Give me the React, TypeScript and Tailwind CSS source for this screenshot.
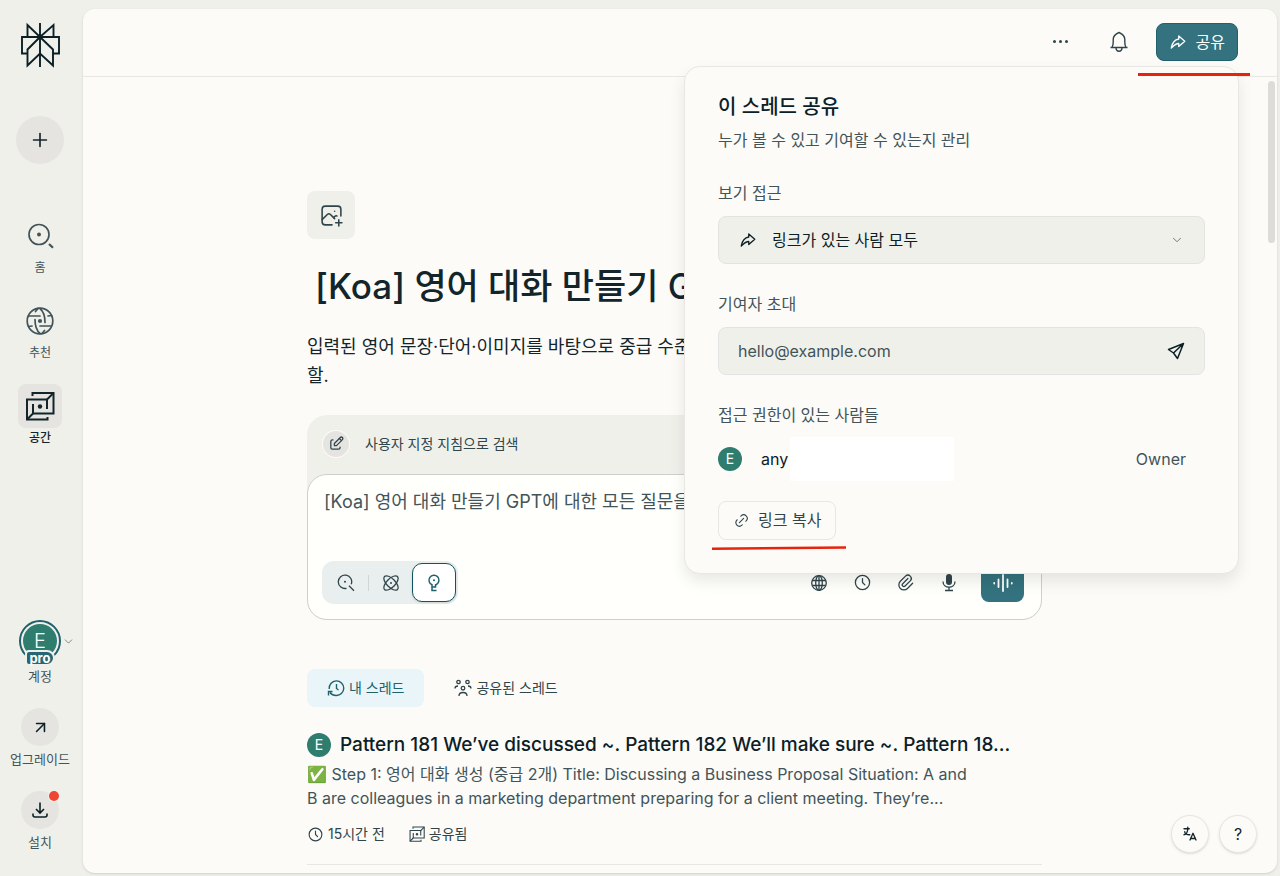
import { useState } from "react"
import type { ReactNode } from "react"
import {
  TbClock,
  TbEdit,
  TbLanguage,
  TbLink,
  TbPaperclip,
  TbPhotoPlus,
  TbShare3,
} from "react-icons/tb"
import { ArrowUpRight, ChevronDown, Plus } from "lucide-react"

type IconProps = { className?: string }

function Logo() {
  return (
    <svg viewBox="0 0 40 46" className="h-[46px] w-10" fill="none" stroke="#0b2026" strokeWidth="1.9">
      <path d="M20 1v44M2 15h37v16.500h-6M2 14v17.500h5.500" />
      <path d="M7.500 15V3L20 15 33.500 3v12M20 15 7.500 27.500V43.500L20 31.500l13 12V27.500L20 15" />
      <circle cx="20" cy="15" r="2.500" fill="#0b2026" stroke="none" />
    </svg>
  )
}

function HomeIcon({ className }: IconProps) {
  return (
    <svg viewBox="0 0 28 28" className={className} fill="none" stroke="currentColor" strokeWidth="1.7">
      <circle cx="13" cy="12.500" r="10" />
      <circle cx="13" cy="12.500" r="2" fill="currentColor" stroke="none" />
      <path d="m23 22 4 3.800" strokeWidth="2.200" />
    </svg>
  )
}

function DiscoverIcon({ className }: IconProps) {
  return (
    <svg viewBox="0 0 28 28" className={className} fill="none" stroke="currentColor" strokeWidth="1.7" strokeLinecap="round">
      <circle cx="14" cy="14" r="12.800" />
      <circle cx="14" cy="14" r="2.100" fill="currentColor" stroke="none" />
      <path d="M3 9h11M14 19h11M14 1.500c3.500 3 5 7 5 14M14 26.500c-3.500-3-5-7-5-14" />
      <path d="M12 1.500 9.500 4.500M16 26.500l2.500-3M22 9l3.500-.500M6 19l-3.500.500" />
    </svg>
  )
}

function SpacesIcon({ className }: IconProps) {
  return (
    <svg viewBox="0 0 30 30" className={className} fill="none" stroke="currentColor" strokeWidth="2">
      <path d="M7.500 5V2H28.500v20.500H8V13" />
      <path d="M22 18V8.500H2v20h20.500V26" />
      <path d="M28.500 2 22 8.500M2 28.500l6-6" />
      <circle cx="15" cy="15.500" r="2.200" fill="currentColor" stroke="none" />
    </svg>
  )
}

function BellIcon() {
  return (
    <svg viewBox="0 0 20 22" className="h-[22px] w-5" fill="none" stroke="currentColor" strokeWidth="1.4" strokeLinejoin="round">
      <path d="M1.500 16.500h17M3 16.500c.8-1.500 1.200-3 1.200-5V8.500C4.200 4.500 7.500 2.500 10 1.500c2.500 1 5.800 3 5.800 7v3c0 2 .4 3.500 1.200 5" />
      <path d="M7 16.500c0 5 6 5 6 0" />
    </svg>
  )
}

function SendIcon() {
  return (
    <svg viewBox="0 0 18 18" className="size-[18px]" fill="none" stroke="currentColor" strokeWidth="1.5" strokeLinejoin="round">
      <path d="M16.500 1.500 1.500 7.500l5 3.500 4 5.500 6-15ZM6.500 11l10-9.500" />
    </svg>
  )
}

function SearchIcon() {
  return (
    <svg viewBox="0 0 18 18" className="size-[18px]" fill="none" stroke="currentColor" strokeWidth="1.3">
      <path d="M9.500 14.300A6.700 6.700 0 1 1 14.200 10.300M12 11.800l5 5" />
      <circle cx="8" cy="7.800" r="1" fill="currentColor" stroke="none" />
    </svg>
  )
}

function ResearchIcon() {
  return (
    <svg viewBox="0 0 18 18" className="size-[18px]" fill="none" stroke="currentColor" strokeWidth="1.300">
      <ellipse cx="9" cy="9" rx="9.200" ry="4.300" transform="rotate(45 9 9)" />
      <ellipse cx="9" cy="9" rx="9.200" ry="4.300" transform="rotate(-45 9 9)" />
      <circle cx="9" cy="9" r="1" fill="currentColor" stroke="none" />
    </svg>
  )
}

function BulbIcon() {
  return (
    <svg viewBox="0 0 18 18" className="size-[18px]" fill="none" stroke="currentColor" strokeWidth="1.500">
      <path d="M7 14v-3.200a5 5 0 1 1 4.500-.300L10.500 11v2H7M7 13v3.500h4.500" />
      <circle cx="9" cy="6.200" r="1" fill="currentColor" stroke="none" />
    </svg>
  )
}

function GlobeIcon() {
  return (
    <svg viewBox="0 0 18 18" className="size-[18px]" fill="none" stroke="currentColor" strokeWidth="1.300">
      <circle cx="9" cy="9" r="7.300" />
      <ellipse cx="9" cy="9" rx="3.300" ry="7.300" />
      <path d="M2.500 6.500h13M2.500 11.500h13M9 2v14" />
    </svg>
  )
}

function MicIcon() {
  return (
    <svg viewBox="0 0 18 18" className="size-[18px]" fill="none" stroke="currentColor" strokeWidth="1.300">
      <rect x="6" y="0" width="6" height="11" rx="3" fill="currentColor" stroke="none" />
      <path d="M3 7.500c0 7.500 12 7.500 12 0M9 13v3.500M5 16.500h8" />
    </svg>
  )
}

function VoiceIcon() {
  return (
    <svg viewBox="0 0 20 18" className="h-[18px] w-5" fill="none" stroke="currentColor" strokeWidth="1.800" strokeLinecap="round">
      <path d="M1.200 9v.5M5.500 5.500v7.500M10 1v16M14.500 5.500v7.500M18.800 9v.5" />
    </svg>
  )
}

function HistoryIcon() {
  return (
    <svg viewBox="0 0 18 18" className="size-[18px]" fill="none" stroke="currentColor" strokeWidth="1.400">
      <path d="M2.200 10A7.300 7.300 0 1 1 9 16.500c-2.500 0-4.500-1-6-3M1.500 16.500v-4H5.500M9.500 5v4.500l2 1.500" />
    </svg>
  )
}

function PeopleIcon() {
  return (
    <svg viewBox="0 0 18 18" className="size-[18px]" fill="none" stroke="currentColor" strokeWidth="1.300">
      <circle cx="4.500" cy="3" r="1.700" />
      <circle cx="13.500" cy="3" r="1.700" />
      <circle cx="9" cy="9.200" r="1.800" />
      <path d="M1 9.500C1 7.800 2 7 4 7M17 9.500C17 7.800 16 7 14 7M5 17c0-2.500 1.500-3.500 4-3.500s4 1 4 3.500" />
    </svg>
  )
}

type NavItemProps = { label: string; icon: ReactNode; active?: boolean }

function NavItem({ label, icon, active }: NavItemProps) {
  return (
    <a href="#" className={`flex flex-col items-center ${active ? "font-medium text-[#13252b]" : "text-[#425459]"}`}>
      <span className={`flex size-11 items-center justify-center rounded-lg ${active ? "bg-[#e5e4e0]" : ""}`}>{icon}</span>
      <span className="text-xs leading-5">{label}</span>
    </a>
  )
}

function Sidebar() {
  return (
    <nav className="mr-[3px] flex w-20 shrink-0 flex-col items-center pt-[22px] pb-6">
      <a href="#" aria-label="Perplexity">
        <Logo />
      </a>
      <button aria-label="새 스레드" className="mt-12 flex size-12 shrink-0 items-center justify-center rounded-full bg-[#e5e4e0] text-[#13252b]">
        <Plus size={22} strokeWidth={1.8} />
      </button>

      <div className="mt-[50px] flex flex-col gap-[21px]">
        <NavItem label="홈" icon={<HomeIcon className="size-7" />} />
        <NavItem label="추천" icon={<DiscoverIcon className="size-7" />} />
        <NavItem label="공간" icon={<SpacesIcon className="size-[30px]" />} active />
      </div>

      <div className="mt-auto flex flex-col items-center gap-[22px] text-[13px] leading-5 text-[#425459]">
        <button className="relative flex flex-col items-center">
          <span className="flex size-[42px] items-center justify-center rounded-full border-2 border-[#20616c] bg-[#f0f0eb]">
            <span className="flex size-[34px] items-center justify-center rounded-full bg-[#2f7d6e] text-xl font-light text-white">E</span>
          </span>
          <span className="absolute top-[30px] rounded-sm rounded-r-lg border-2 border-[#f0f0eb] bg-[#266773] px-0.5 text-[13px] leading-3 font-bold text-white">
            pro
          </span>
          <ChevronDown size={13} strokeWidth={1.8} className="absolute top-[15px] -right-[14px] text-[#7d8889]" />
          <span className="mt-1">계정</span>
        </button>
        <a href="#" className="flex flex-col items-center gap-[3px]">
          <span className="flex size-[38px] items-center justify-center rounded-full bg-[#e5e4e0] text-[#0b2026]">
            <ArrowUpRight size={19} strokeWidth={2} />
          </span>
          업그레이드
        </a>
        <a href="#" className="relative flex flex-col items-center gap-[3px]">
          <span className="flex size-[38px] items-center justify-center rounded-full bg-[#e5e4e0] text-[#0b2026]">
            <svg viewBox="0 0 18 18" className="size-[18px]" fill="none" stroke="currentColor" strokeWidth="1.600">
              <path d="M9 1.500v10M5 8l4 4 4-4M2 12.500V14q0 2 2 2h10q2 0 2-2v-1.500" />
            </svg>
          </span>
          <span className="absolute top-0 right-0 size-[10px] rounded-full bg-[#ee4632] ring-1 ring-[#f0f0eb]" />
          설치
        </a>
      </div>
    </nav>
  )
}

function SharePopover() {
  const [email, setEmail] = useState("")

  return (
    <div
      role="dialog"
      aria-label="이 스레드 공유"
      className="absolute top-[43px] -right-px z-10 w-[555px] rounded-2xl border border-[#e8e7e3] bg-[#fcfbf8] px-[33px] pt-[26px] pb-[33px] text-base leading-6 text-[#425459] shadow-[0_8px_16px_rgba(0,0,0,0.09)]"
    >
      <h2 className="text-xl leading-7 font-medium text-[#0b2026]">이 스레드 공유</h2>
      <p className="mt-[7px]">누가 볼 수 있고 기여할 수 있는지 관리</p>

      <label htmlFor="access" className="mt-[29px] block">
        보기 접근
      </label>
      <div className="mt-[11px] flex h-12 items-center rounded-lg border border-[#e3e4df] bg-[#f0f0eb] px-5 text-[#0b2026]">
        <TbShare3 size={18} strokeWidth={1.8} />
        <select id="access" className="ml-[15px] flex-1 appearance-none bg-transparent outline-none">
          <option>링크가 있는 사람 모두</option>
          <option>비공개</option>
        </select>
        <ChevronDown size={14} strokeWidth={1.5} className="pointer-events-none text-[#5b696c]" />
      </div>

      <label htmlFor="invite" className="mt-7 block">
        기여자 초대
      </label>
      <div className="mt-[11px] flex h-12 items-center rounded-lg border border-[#e3e5e5] bg-[#f0f0eb] px-[19px]">
        <input
          id="invite"
          type="email"
          value={email}
          onChange={(e) => setEmail(e.target.value)}
          placeholder="hello@example.com"
          className="min-w-0 flex-1 bg-transparent outline-none placeholder:text-[#425459]"
        />
        <button aria-label="초대 보내기" className="text-[#0b2026]">
          <SendIcon />
        </button>
      </div>

      <h3 className="mt-7">접근 권한이 있는 사람들</h3>
      <div className="mt-[10px] flex h-11 items-center">
        <span className="flex size-6 items-center justify-center rounded-full bg-[#2f7d6e] text-sm text-white">E</span>
        <span className="ml-[19px] text-[#0b2026]">any</span>
        <span className="ml-0.5 h-11 w-[164px] bg-white" />
        <span className="mr-[19px] ml-auto">Owner</span>
      </div>

      <div className="relative mt-5">
        <button className="flex h-[39px] items-center gap-2 rounded-lg border border-[#e8e7e3] px-[14px] text-[#30454a]">
          <TbLink size={17} strokeWidth={1.6} />
          링크 복사
        </button>
        <svg viewBox="0 0 136 6" className="absolute top-11 -left-[7px] h-[6px] w-[136px]" stroke="#e8230c" strokeWidth="2.500">
          <path d="M1 3.800 135 2.400" />
        </svg>
      </div>
    </div>
  )
}

function Header() {
  return (
    <header className="flex h-[68px] shrink-0 items-center justify-end border-b border-[#e8e7e3] pr-[39px] pb-0.5 text-[#30454a]">
      <button aria-label="더 보기" className="flex w-5 items-center justify-center gap-[3px]">
        <span className="size-[3px] rounded-full bg-current" />
        <span className="size-[3px] rounded-full bg-current" />
        <span className="size-[3px] rounded-full bg-current" />
      </button>
      <button aria-label="알림" className="ml-[38px]">
        <BellIcon />
      </button>
      <div className="relative ml-[27px]">
        <button className="flex h-[38px] items-center gap-[9px] rounded-lg border border-[#20616c] bg-[#33727e] px-3 text-base text-white">
          <TbShare3 size={18} strokeWidth={1.8} />
          공유
        </button>
        <SharePopover />
        <span className="absolute top-[50px] -right-3 z-20 h-[3px] w-[112px] bg-[#e8230c]" />
      </div>
    </header>
  )
}

function Composer() {
  return (
    <div className="mt-[25px] rounded-[20px] bg-[#f0f0eb]">
      <div className="flex h-[59px] items-center gap-4 px-4 pb-0.5 text-sm text-[#30454a]">
        <button aria-label="지침 편집" className="flex size-[26px] items-center justify-center rounded-full bg-[#e5e4e0] ring-1 ring-[#fcfbf8]">
          <TbEdit size={17} strokeWidth={1.8} />
        </button>
        <span>사용자 지정 지침으로 검색</span>
      </div>
      <div className="rounded-[20px] border border-[#d0d0ca] bg-[#fffffc] pt-[15px] pr-[17px] pb-[15px] pl-[14px]">
        <textarea
          rows={2}
          aria-label="질문"
          placeholder="[Koa] 영어 대화 만들기 GPT에 대한 모든 질문을 하세요"
          className="block h-[71px] w-full resize-none bg-transparent pl-0.5 text-lg leading-6 outline-none placeholder:text-[#425459]"
        />
        <div className="flex items-center text-[#30454a]">
          <div className="flex h-[43px] items-center rounded-xl bg-[#e9eeee] p-0.5">
            <button aria-label="검색" className="flex w-11 justify-center">
              <SearchIcon />
            </button>
            <span className="h-4 w-px bg-[#d0d6d6]" />
            <button aria-label="연구" className="flex w-[43px] justify-center">
              <ResearchIcon />
            </button>
            <button aria-label="랩" className="flex h-[39px] w-11 items-center justify-center rounded-[10px] border border-[#0f5561] bg-white text-[#20616c] shadow-sm">
              <BulbIcon />
            </button>
          </div>
          <div className="ml-auto flex items-center">
            <button aria-label="소스" className="flex w-[43px] justify-center">
              <GlobeIcon />
            </button>
            <button aria-label="예약" className="flex w-11 justify-center">
              <TbClock size={19} strokeWidth={1.6} />
            </button>
            <button aria-label="파일 첨부" className="flex w-[43px] justify-center">
              <TbPaperclip size={19} strokeWidth={1.6} />
            </button>
            <button aria-label="받아쓰기" className="flex w-11 justify-center">
              <MicIcon />
            </button>
            <button aria-label="음성 모드" className="ml-2.5 flex h-[39px] w-[43px] items-center justify-center rounded-lg bg-[#33727e] text-white">
              <VoiceIcon />
            </button>
          </div>
        </div>
      </div>
    </div>
  )
}

function Thread() {
  return (
    <article className="mt-6 border-b border-[#e8e7e3] pb-5">
      <div className="flex items-center gap-[9px]">
        <span className="flex size-6 shrink-0 items-center justify-center rounded-full bg-[#2f7d6e] text-sm text-white">E</span>
        <h2 className="text-[19px] leading-7 font-medium whitespace-nowrap text-[#0b2026]">
          Pattern 181 We’ve discussed ~. Pattern 182 We’ll make sure ~. Pattern 18...
        </h2>
      </div>
      <p className="mt-[3px] text-base leading-6 text-[#425459]">
        ✅ Step 1: 영어 대화 생성 (중급 2개) Title: Discussing a Business Proposal Situation: A and
        <br />B are colleagues in a marketing department preparing for a client meeting. They’re...
      </p>
      <div className="mt-[14px] flex items-center gap-6 text-sm leading-5 text-[#30454a]">
        <span className="flex items-center gap-1">
          <TbClock size={17} strokeWidth={1.6} />
          15시간 전
        </span>
        <span className="flex items-center gap-1">
          <SpacesIcon className="size-4" />
          공유됨
        </span>
      </div>
    </article>
  )
}

export default function App() {
  return (
    <div className="flex h-screen overflow-hidden bg-[#f0f0eb] font-[Inter,'Noto_Sans_CJK_KR',sans-serif]">
      <Sidebar />
      <div className="relative mt-[9px] mr-[3px] mb-[3px] flex min-w-0 flex-1 flex-col rounded-xl bg-[#fcfbf8] shadow-sm">
        <Header />
        <div className="flex min-h-0 flex-1">
          <main className="flex min-w-0 flex-1 flex-col items-center overflow-hidden">
            <div className="w-full max-w-[735px] pt-[114px]">
              <button aria-label="이미지 추가" className="flex size-12 items-center justify-center rounded-lg bg-[#f0f0eb] text-[#30454a]">
                <TbPhotoPlus size={25} strokeWidth={1.5} />
              </button>
              <h1 className="mt-[23px] pl-2 text-[35px] leading-12 font-medium text-[#13252b]">[Koa] 영어 대화 만들기 GPT</h1>
              <p className="mt-[22px] text-lg leading-[29px] text-[#13252b]">
                입력된 영어 문장·단어·이미지를 바탕으로 중급 수준의 대화를 만들어야
                <br />
                할.
              </p>
              <Composer />
              <div className="mt-[49px] flex gap-[10px] text-sm">
                <button className="flex h-[38px] items-center gap-1 rounded-lg bg-[#e9f5f8] px-5 text-[#20616c]">
                  <HistoryIcon />내 스레드
                </button>
                <button className="flex h-[38px] items-center gap-1 px-5 text-[#30454a]">
                  <PeopleIcon />
                  공유된 스레드
                </button>
              </div>
              <Thread />
            </div>
          </main>
          {/* Scroll track */}
          <div className="w-[11px] shrink-0 px-0.5 pt-1">
            <div className="h-[162px] w-[7px] rounded-full bg-[#dddcd8]" />
          </div>
        </div>

        <div className="absolute right-5 bottom-5 flex gap-[10px] text-[#13252b]">
          <button aria-label="언어" className="flex size-[38px] items-center justify-center rounded-full border border-[#e8e7e3] bg-[#fcfbf8] shadow-sm">
            <TbLanguage size={18} strokeWidth={1.8} />
          </button>
          <button aria-label="도움말" className="flex size-[38px] items-center justify-center rounded-full border border-[#e8e7e3] bg-[#fcfbf8] text-base shadow-sm">
            ?
          </button>
        </div>
      </div>
    </div>
  )
}
